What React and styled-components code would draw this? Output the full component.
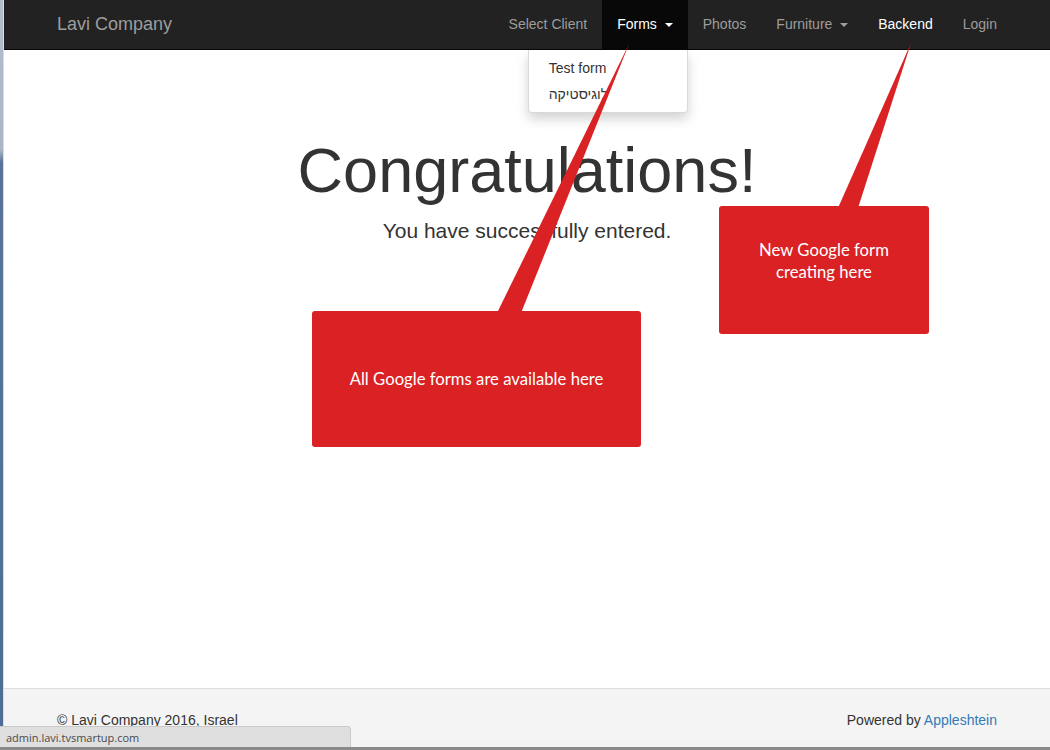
import React from 'react'
import styled, { createGlobalStyle } from 'styled-components'

const GlobalStyle = createGlobalStyle`
  html, body {
    margin: 0;
    padding: 0;
    background: #fff;
  }
  body {
    font-family: "Liberation Sans", Arial, sans-serif;
    font-size: 14px;
    line-height: 1.42857;
    color: #333;
  }
  * { box-sizing: border-box; }
`

const Frame = styled.div`
  position: relative;
  display: flex;
  width: 1050px;
  height: 750px;
  overflow: hidden;
  border-bottom: 3px solid #8a8a8a;
`

const WindowEdge = styled.div`
  flex: 0 0 4px;
  background: linear-gradient(to bottom, #b3bdcc 0, #aab5c6 150px, #587599 162px, #4f6d93 100%);
  border-right: 1px solid #d8dde5;
`

const Page = styled.div`
  flex: 1;
  display: flex;
  flex-direction: column;
  min-width: 0;
`

const Navbar = styled.nav`
  flex: 0 0 50px;
  background: #222;
  border-bottom: 1px solid #080808;
`

const Container = styled.div`
  width: 970px;
  margin: 0 auto;
  padding: 0 15px;
  display: flex;
  justify-content: space-between;
  align-items: center;
`

const Brand = styled.a`
  margin-left: -15px;
  padding: 15px;
  font-size: 18px;
  line-height: 19px;
  color: #9d9d9d;
  text-decoration: none;
`

const NavList = styled.ul`
  display: flex;
  margin: 0 -15px 0 0;
  padding: 0;
  list-style: none;
`

const NavItem = styled.li`
  position: relative;
  padding: 14px 15px 15px;
  line-height: 20px;
  white-space: nowrap;
  color: ${p => (p.$bright ? '#fff' : '#9d9d9d')};
  background: ${p => (p.$open ? '#080808' : 'transparent')};
`

const Caret = styled.span`
  display: inline-block;
  width: 0;
  height: 0;
  margin-left: 4px;
  vertical-align: middle;
  border-top: 4px solid currentColor;
  border-left: 4px solid transparent;
  border-right: 4px solid transparent;
`

const Dropdown = styled.ul`
  position: absolute;
  top: calc(100% + 1px);
  right: 0;
  z-index: 5;
  min-width: 160px;
  margin: 0;
  padding: 5px 0;
  list-style: none;
  background: #fff;
  border: 1px solid rgba(0, 0, 0, 0.15);
  border-top: none;
  border-radius: 0 0 4px 4px;
  box-shadow: 0 6px 12px rgba(0, 0, 0, 0.175);
`

const DropItem = styled.li`
  padding: 3px 20px;
  line-height: 20px;
  color: #333;
  white-space: nowrap;
`

const Main = styled.main`
  flex: 1;
  padding-top: 86px;
  text-align: center;
`

const Title = styled.h1`
  margin: 0;
  font-size: 63px;
  line-height: 1.1;
  font-weight: 500;
  color: #333;
`

const Lead = styled.p`
  margin: 11px 0 0;
  font-size: 21px;
  line-height: 30px;
  color: #333;
`

const Footer = styled.footer`
  flex: 0 0 59px;
  padding-top: 21px;
  background: #f4f4f4;
  border-top: 1px solid #ddd;
`

const FooterText = styled.span`
  line-height: 20px;
  color: #333;
`

const FooterLink = styled.a`
  color: #337ab7;
  text-decoration: none;
`

const StatusBar = styled.div`
  position: absolute;
  left: 0;
  bottom: 0;
  z-index: 10;
  width: 351px;
  height: 21px;
  padding: 3px 6px 0;
  background: #dfdfdf;
  border-top: 1px solid #c9c9c9;
  border-right: 1px solid #c9c9c9;
  border-radius: 0 4px 0 0;
  font-family: "Open Sans", "Noto Sans", sans-serif;
  font-size: 11px;
  line-height: 15px;
  color: #4a4a4a;
`

const Tails = styled.svg`
  position: absolute;
  left: 0;
  top: 0;
  z-index: 8;
  pointer-events: none;
`

const Callout = styled.div`
  position: absolute;
  z-index: 9;
  display: flex;
  align-items: ${p => (p.$centered ? 'center' : 'flex-start')};
  justify-content: center;
  padding: ${p => (p.$centered ? '0 20px' : '33px 20px 0')};
  background: #da2124;
  border-radius: 3px;
  color: #fff;
  font-family: "Lato", "Open Sans", sans-serif;
  font-size: 16.7px;
  line-height: 22px;
  text-align: center;
`

const navItems = [
  { label: 'Select Client' },
  { label: 'Forms', bright: true, open: true, caret: true },
  { label: 'Photos' },
  { label: 'Furniture', caret: true },
  { label: 'Backend', bright: true },
  { label: 'Login' },
]

const App = () => (
  <>
    <GlobalStyle />
    <Frame>
      <WindowEdge />
      <Page>
        <Navbar>
          <Container>
            <Brand>Lavi Company</Brand>
            <NavList>
              {navItems.map(item => (
                <NavItem key={item.label} $bright={item.bright} $open={item.open}>
                  {item.label}
                  {item.caret && <> <Caret /></>}
                  {item.open && (
                    <Dropdown>
                      <DropItem>Test form</DropItem>
                      <DropItem>לוגיסטיקה</DropItem>
                    </Dropdown>
                  )}
                </NavItem>
              ))}
            </NavList>
          </Container>
        </Navbar>
        <Main>
          <Title>Congratulations!</Title>
          <Lead>You have successfully entered.</Lead>
        </Main>
        <Footer>
          <Container>
            <FooterText>© Lavi Company 2016, Israel</FooterText>
            <FooterText>
              Powered by <FooterLink>Appleshtein</FooterLink>
            </FooterText>
          </Container>
        </Footer>
      </Page>

      <Tails width="1050" height="750" viewBox="0 0 1050 750">
        <polygon points="497,313 521,313 629,44" fill="#da2124" />
        <polygon points="838,208 858,208 911,43" fill="#da2124" />
      </Tails>
      <Callout $centered style={{ left: 312, top: 311, width: 329, height: 136 }}>
        All Google forms are available here
      </Callout>
      <Callout style={{ left: 719, top: 206, width: 210, height: 128 }}>
        New Google form<br />creating here
      </Callout>
      <StatusBar>admin.lavi.tvsmartup.com</StatusBar>
    </Frame>
  </>
)

export default App
